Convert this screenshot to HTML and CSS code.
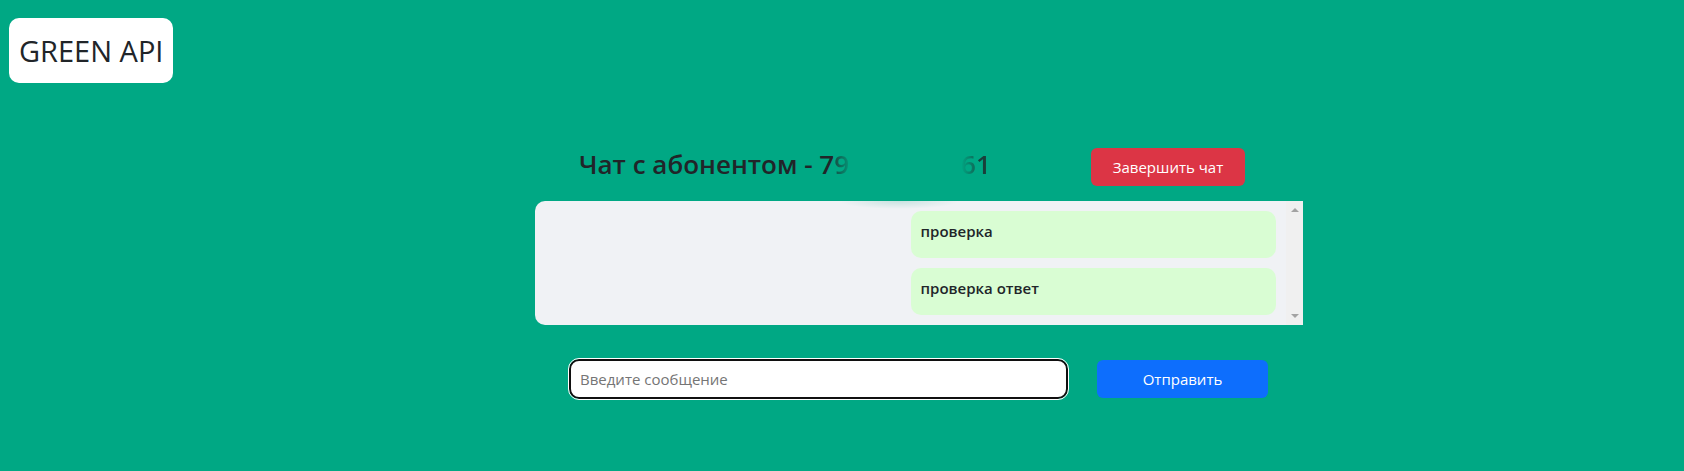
FILE: index.html
```html
<!DOCTYPE html>
<html lang="ru">
<head>
<meta charset="utf-8">
<title>GREEN API</title>
<link rel="stylesheet" href="styles.css">
</head>
<body>
<header class="top"><div class="brand">GREEN API</div></header>
<main class="page">
  <section class="chat">
    <div class="chat-head">
      <h1 class="title">Чат с абонентом - 7<span class="fade-out">9</span><span class="hidden-digits"></span><span class="fade-in">6</span><span class="last">1</span></h1>
      <button class="btn btn-danger" type="button">Завершить чат</button>
    </div>
    <div class="panel">
      <div class="messages">
        <p class="message">проверка</p>
        <p class="message">проверка ответ</p>
      </div>
      <div class="scrollbar" aria-hidden="true">
        <svg width="8" height="4" viewBox="0 0 8 4"><path d="M0 4L4 0L8 4Z" fill="#a3a3a3"/></svg>
        <svg width="8" height="4" viewBox="0 0 8 4"><path d="M0 0L4 4L8 0Z" fill="#a3a3a3"/></svg>
      </div>
    </div>
    <form class="composer">
      <input class="field" type="text" placeholder="Введите сообщение" aria-label="Введите сообщение">
      <button class="btn btn-primary" type="button">Отправить</button>
    </form>
  </section>
</main>
</body>
</html>
```
FILE: styles.css
```css
* { box-sizing: border-box; }
body {
  margin: 0;
  min-height: 100vh;
  background: #00a884;
  color: #212529;
  font: 15px/24px "Open Sans", "Noto Sans", sans-serif;
}
.top { display: flex; padding: 18px 9px 0; }
.brand {
  padding: 10px;
  border-radius: 10px;
  background: #fff;
  font-size: 29px;
  line-height: 45px;
  font-weight: 400;
}
.page {
  display: grid;
  grid-template-columns: 535fr 768fr 381fr;
  padding-top: 65px;
}
.chat { grid-column: 2; min-width: 0; }
.chat-head {
  display: flex;
  align-items: flex-start;
  justify-content: space-between;
  padding: 0 58px 15px 44px;
}
.title {
  margin: 0;
  font-size: 26px;
  line-height: 32px;
  font-weight: 600;
  white-space: nowrap;
}
.fade-out { -webkit-mask-image: linear-gradient(90deg, rgba(0,0,0,.7), rgba(0,0,0,.15)); mask-image: linear-gradient(90deg, rgba(0,0,0,.7), rgba(0,0,0,.15)); }
.fade-in { -webkit-mask-image: linear-gradient(90deg, transparent, rgba(0,0,0,.5)); mask-image: linear-gradient(90deg, transparent, rgba(0,0,0,.5)); }
.last { opacity: .8; }
.hidden-digits { display: inline-block; width: 112px; }
.btn {
  height: 38px;
  padding: 0;
  border: 0;
  border-radius: 6px;
  color: #fff;
  font: inherit;
}
.btn-danger { width: 154px; background: #dc3545; }
.btn-primary { width: 171px; background: #0d6efd; }
.panel {
  display: flex;
  overflow: hidden;
  border-radius: 10px 0 0 10px;
  background: radial-gradient(ellipse 60px 8px at 364px 0, #c8e2e0, rgba(240,242,245,0)), #f0f2f5;
}
.messages {
  flex: 1;
  display: flex;
  flex-direction: column;
  align-items: flex-end;
  gap: 10px;
  padding: 10px;
}
.message {
  width: 50%;
  min-height: 47px;
  margin: 0;
  padding: 8px 10px 15px;
  border-radius: 10px;
  background: #d9fdd3;
  font-weight: 600;
}
.scrollbar {
  width: 17px;
  display: flex;
  flex-direction: column;
  align-items: center;
  justify-content: space-between;
  padding: 7px 0;
  background: #f0f0f0;
}
.composer {
  display: flex;
  align-items: center;
  gap: 29px;
  padding: 34px 35px 0 34px;
}
.field {
  flex: 1;
  min-width: 0;
  height: 40px;
  padding: 0 9px;
  border: 2px solid #101010;
  border-radius: 10px;
  outline: 1px solid #fff;
  background: #fff;
  font: inherit;
}
.field::placeholder { color: #757575; opacity: 1; }
```
